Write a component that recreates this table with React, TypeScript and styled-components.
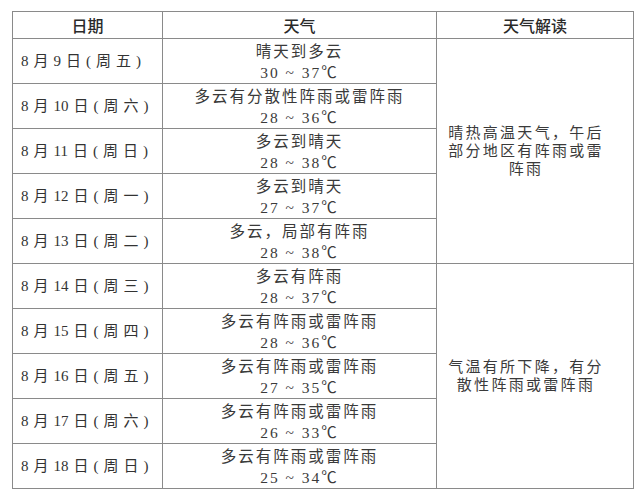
import { FC } from 'react'
import styled, { createGlobalStyle } from 'styled-components'

type Day = { day: string; week: string; weather: string; temp: string }

const days: Day[] = [
  { day: '9', week: '五', weather: '晴天到多云', temp: '30 ~ 37℃' },
  { day: '10', week: '六', weather: '多云有分散性阵雨或雷阵雨', temp: '28 ~ 36℃' },
  { day: '11', week: '日', weather: '多云到晴天', temp: '28 ~ 38℃' },
  { day: '12', week: '一', weather: '多云到晴天', temp: '27 ~ 37℃' },
  { day: '13', week: '二', weather: '多云，局部有阵雨', temp: '28 ~ 38℃' },
  { day: '14', week: '三', weather: '多云有阵雨', temp: '28 ~ 37℃' },
  { day: '15', week: '四', weather: '多云有阵雨或雷阵雨', temp: '28 ~ 36℃' },
  { day: '16', week: '五', weather: '多云有阵雨或雷阵雨', temp: '27 ~ 35℃' },
  { day: '17', week: '六', weather: '多云有阵雨或雷阵雨', temp: '26 ~ 33℃' },
  { day: '18', week: '日', weather: '多云有阵雨或雷阵雨', temp: '25 ~ 34℃' },
]

const notes = ['晴热高温天气，午后部分地区有阵雨或雷阵雨', '气温有所下降，有分散性阵雨或雷阵雨']

const App: FC = () => {
  return (
    <>
      <GlobalStyle />
      <Page>
        <Table>
          <colgroup>
            <col style={{ width: 150 }} />
            <col style={{ width: 274 }} />
            <col style={{ width: 197 }} />
          </colgroup>
          <thead>
            <tr>
              <HeadCell>日期</HeadCell>
              <HeadCell>天气</HeadCell>
              <HeadCell>天气解读</HeadCell>
            </tr>
          </thead>
          <tbody>
            {days.map((d, i) => (
              <tr key={d.day}>
                <DateCell>
                  8月<Num>{d.day}</Num>日(周{d.week})
                </DateCell>
                <WeatherCell>
                  <Line>{d.weather}</Line>
                  <Line>{d.temp}</Line>
                </WeatherCell>
                {i % 5 === 0 && <NoteCell rowSpan={5}>{notes[i / 5]}</NoteCell>}
              </tr>
            ))}
          </tbody>
        </Table>
      </Page>
    </>
  )
}

const GlobalStyle = createGlobalStyle`
  body {
    margin: 0;
    background: #fff;
    color: #333;
    font-family: "Liberation Serif", "Noto Sans CJK SC", serif;
  }
`

const Page = styled.div`
  padding: 11px 0 0 12px;
`

const Table = styled.table`
  border-collapse: collapse;
  table-layout: fixed;
  width: 621px;

  td,
  th {
    border: 1px solid #8a8a8a;
    padding: 0;
  }
`

const HeadCell = styled.th`
  height: 26px;
  font-family: "Noto Sans CJK SC", sans-serif;
  font-size: 16px;
  font-weight: 500;
  color: #2a2a2a;
  text-align: center;
  line-height: 20px;
`

const DateCell = styled.td`
  height: 44px;
  padding-left: 8px !important;
  font-size: 15px;
  line-height: 20px;
  letter-spacing: 5px;
  color: #333;
  white-space: nowrap;
`

const Num = styled.span`
  letter-spacing: 0;
  margin-right: 5px;
`

const WeatherCell = styled.td`
  height: 41px;
  text-align: center;
  vertical-align: top;
  padding-top: 3px !important;
  overflow: hidden;
`

const Line = styled.div`
  height: 20.5px;
  font-size: 15.5px;
  letter-spacing: 2px;
  line-height: 20.5px;
  color: #3a3a3a;
  white-space: nowrap;
`

const NoteCell = styled.td`
  text-align: center;
  vertical-align: middle;
  padding: 0 22px 0 4px !important;
  font-size: 15px;
  letter-spacing: 2.3px;
  line-height: 18px;
  color: #3a3a3a;
`

export default App
